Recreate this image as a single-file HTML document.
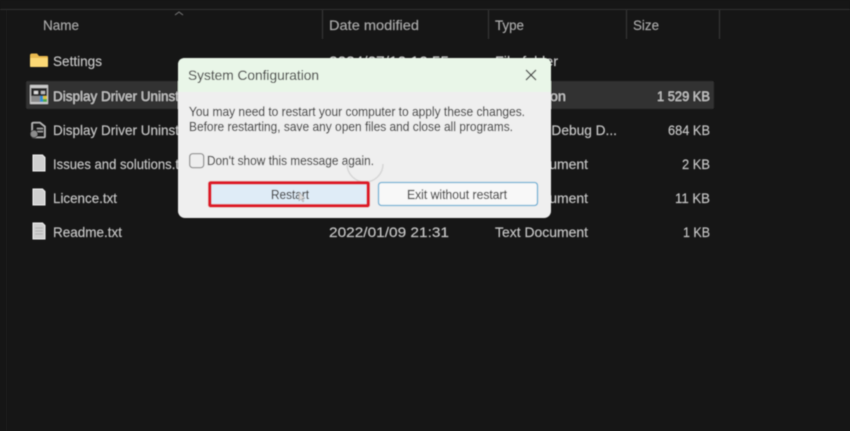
<!DOCTYPE html>
<html><head><meta charset="utf-8"><style>
html,body{margin:0;padding:0;background:#161616;overflow:hidden}
svg{display:block}
text{font-family:"Liberation Sans",sans-serif}
.b text{font-size:14px;fill:#c8c8c8;stroke:#c8c8c8;stroke-width:.15}
.h text{font-size:14px;fill:#acacac;stroke:#acacac;stroke-width:.15}
.d text{font-size:12.5px;fill:#404040;stroke:#404040;stroke-width:.15}
</style></head><body>
<svg width="850" height="431" viewBox="0 0 850 431" xmlns="http://www.w3.org/2000/svg">
<defs><filter id="s" x="-2%" y="-2%" width="104%" height="104%"><feGaussianBlur stdDeviation="0.4"/></filter></defs>
<rect width="850" height="431" fill="#161616"/>
<g filter="url(#s)">
<rect x="0" y="0" width="850" height="9" fill="#181818"/>
<rect x="0" y="9" width="850" height="1" fill="#2e2e2e"/>
<rect x="6" y="10" width="1" height="421" fill="#1f1f1f"/>
<rect x="322" y="10" width="1" height="29" fill="#3a3a3a"/>
<rect x="488" y="10" width="1" height="29" fill="#3a3a3a"/>
<rect x="626" y="10" width="1" height="29" fill="#3a3a3a"/>
<rect x="719" y="10" width="1" height="29" fill="#3a3a3a"/>
<path d="M175 15l4-3 4 3" fill="none" stroke="#777" stroke-width="1"/>
<g class="h">
<text x="43" y="30" textLength="36" lengthAdjust="spacingAndGlyphs">Name</text>
<text x="329" y="30" textLength="90" lengthAdjust="spacingAndGlyphs">Date modified</text>
<text x="495" y="30" textLength="29" lengthAdjust="spacingAndGlyphs">Type</text>
<text x="633" y="30" textLength="26" lengthAdjust="spacingAndGlyphs">Size</text>
</g>
<rect x="26" y="81" width="688" height="28" rx="2" fill="#333333"/>
<path d="M30 55.500q0-2 2-2h5l2 2.500h8q1 0 1 1v9q0 1-1 1H31q-1 0-1-1z" fill="#e9b94f"/>
<path d="M30 58h18v8q0 1-1 1H31q-1 0-1-1z" fill="#fbd874"/>
<rect x="30" y="85" width="18" height="19" fill="#c9c9c9"/>
<rect x="31" y="88" width="16" height="8" fill="#2a2a2a"/>
<rect x="34" y="91" width="4" height="3" fill="#ddd"/>
<rect x="41" y="91" width="4" height="3" fill="#bbb"/>
<rect x="31" y="96" width="9" height="6" fill="#8a8a8a"/>
<rect x="40" y="96" width="3" height="6" fill="#2f8fd0"/>
<rect x="43" y="96" width="4" height="3" fill="#d9c23c"/>
<rect x="43" y="99" width="4" height="3" fill="#4ea84e"/>
<path d="M34 122.500h6l5 4v10q0 1-1 1H34q-2 0-2-2v-12q0-1 2-1z" fill="#1d1d1d" stroke="#bdbdbd" stroke-width="1.600"/>
<rect x="37" y="128" width="6" height="1.200" fill="#aaa"/><rect x="37" y="131" width="6" height="1.200" fill="#aaa"/>
<circle cx="34" cy="134" r="3.800" fill="#8c8c8c" stroke="#222" stroke-width=".8"/>
<path d="M33 155h9.500l2.500 2.500v13.500H33z" fill="#cfcfcf" stroke="#f2f2f2" stroke-width="1"/>
<path d="M33 189h9.500l2.500 2.500v13.500H33z" fill="#cfcfcf" stroke="#f2f2f2" stroke-width="1"/>
<path d="M33 223h9.500l2.500 2.500v13.500H33z" fill="#cfcfcf" stroke="#f2f2f2" stroke-width="1"/>
<path d="M35 228h8M35 231h8M35 234h8" stroke="#aaa" stroke-width=".7"/>
<g class="b">
<text x="53" y="66" textLength="49" lengthAdjust="spacingAndGlyphs">Settings</text>
<text x="53" y="101" textLength="126" lengthAdjust="spacingAndGlyphs">Display Driver Uninst</text>
<text x="53" y="135" textLength="126" lengthAdjust="spacingAndGlyphs">Display Driver Uninst</text>
<text x="53" y="169" textLength="126" lengthAdjust="spacingAndGlyphs">Issues and solutions.t</text>
<text x="53" y="203" textLength="64" lengthAdjust="spacingAndGlyphs">Licence.txt</text>
<text x="53" y="237" textLength="69" lengthAdjust="spacingAndGlyphs">Readme.txt</text>
<text x="329" y="66" textLength="120" lengthAdjust="spacingAndGlyphs">2024/07/10 16:55</text>
<text x="495" y="66" textLength="63" lengthAdjust="spacingAndGlyphs">File folder</text>
<text x="495" y="101" textLength="71" lengthAdjust="spacingAndGlyphs">Application</text>
<text x="495" y="135" textLength="122" lengthAdjust="spacingAndGlyphs">Program Debug D...</text>
<text x="495" y="169" textLength="93" lengthAdjust="spacingAndGlyphs">Text Document</text>
<text x="495" y="203" textLength="93" lengthAdjust="spacingAndGlyphs">Text Document</text>
<text x="495" y="237" textLength="93" lengthAdjust="spacingAndGlyphs">Text Document</text>
<text x="329" y="237" textLength="120" lengthAdjust="spacingAndGlyphs">2022/01/09 21:31</text>
<text x="657" y="101" textLength="53" lengthAdjust="spacingAndGlyphs">1 529 KB</text>
<text x="668" y="135" textLength="42" lengthAdjust="spacingAndGlyphs">684 KB</text>
<text x="682" y="169" textLength="28" lengthAdjust="spacingAndGlyphs">2 KB</text>
<text x="675" y="203" textLength="35" lengthAdjust="spacingAndGlyphs">11 KB</text>
<text x="683" y="237" textLength="27" lengthAdjust="spacingAndGlyphs">1 KB</text>
</g>
<rect x="178" y="58" width="373" height="160" rx="7" fill="#efefef"/>
<path d="M178 92V65q0-7 7-7h359q7 0 7 7v27z" fill="#e9f6e8"/>
<text x="188" y="80" font-size="14" fill="#454545" stroke="#454545" stroke-width=".1" textLength="131" lengthAdjust="spacingAndGlyphs">System Configuration</text>
<path d="M526 70l10 10M536 70l-10 10" stroke="#444" stroke-width="1.300" fill="none"/>
<g class="d">
<text x="189" y="116" textLength="336" lengthAdjust="spacingAndGlyphs">You may need to restart your computer to apply these changes.</text>
<text x="189" y="131" textLength="324" lengthAdjust="spacingAndGlyphs">Before restarting, save any open files and close all programs.</text>
<text x="207" y="165" textLength="167" lengthAdjust="spacingAndGlyphs">Don't show this message again.</text>
</g>
<rect x="189.700" y="153.700" width="14" height="14" rx="3" fill="#eee" stroke="#8a8a8a" stroke-width="1.200"/>
<path d="M347 164a18 18 0 0 0 36 0" fill="none" stroke="#d6d6d6" stroke-width="1.500"/>
<rect x="210" y="183" width="158" height="23" fill="#dfecf7"/>
<rect x="209.750" y="182.750" width="158.500" height="23" rx="1" fill="none" stroke="#dd1c2b" stroke-width="3.500"/>
<text x="271" y="199" font-size="12.500" fill="#404040" stroke="#404040" stroke-width=".15" textLength="38" lengthAdjust="spacingAndGlyphs">Restart</text>
<path d="M299 192v9l2-2 2 3 1-1-2-2.500h3z" fill="#ddd" stroke="#888" stroke-width=".5"/>
<rect x="378.500" y="182.500" width="159" height="23" rx="3" fill="#f8f8f8" stroke="#6cb0d4" stroke-width="1.300"/>
<text x="407" y="199" font-size="12.500" fill="#404040" stroke="#404040" stroke-width=".15" textLength="100" lengthAdjust="spacingAndGlyphs">Exit without restart</text>
</g>
</svg>
</body></html>
